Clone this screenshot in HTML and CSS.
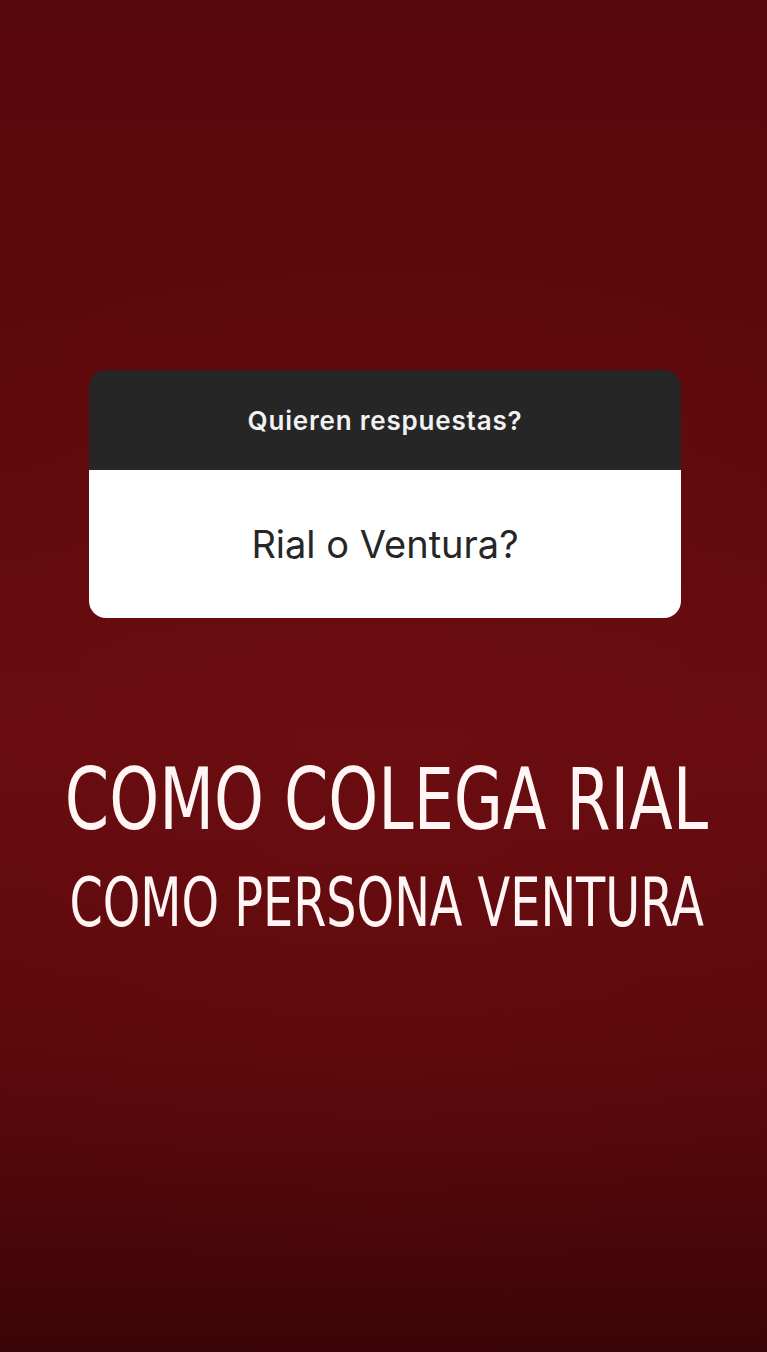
FILE: index.html
```html
<!DOCTYPE html>
<html lang="es">
<head>
<meta charset="utf-8">
<title>Quieren respuestas?</title>
<link rel="stylesheet" href="styles.css">
</head>
<body>
<main class="story">
  <section class="question-card">
    <div class="question-head">Quieren respuestas?</div>
    <div class="question-body">Rial o Ventura?</div>
  </section>
  <section class="caption">
    <p class="line line-one">COMO COLEGA RIAL</p>
    <p class="line line-two">COMO PERSONA VENTURA</p>
  </section>
</main>
</body>
</html>
```
FILE: styles.css
```css
html, body {
  margin: 0;
  padding: 0;
}
body {
  width: 767px;
  height: 1352px;
  overflow: hidden;
  background: #3c0507;
}
.story {
  box-sizing: border-box;
  width: 767px;
  height: 1352px;
  padding-top: 370px;
  display: flex;
  flex-direction: column;
  align-items: center;
  background:
    radial-gradient(ellipse 75% 40% at 50% 55%, rgba(120, 16, 20, 0.25), rgba(120, 16, 20, 0) 100%),
    linear-gradient(180deg, #58070a 0%, #600a0d 35%, #670c10 55%, #5c090c 78%, #3c0507 100%);
}
.question-card {
  width: 592px;
  margin-left: 3px;
  border-radius: 17px;
  overflow: hidden;
  display: flex;
  flex-direction: column;
  font-family: Inter, "Noto Sans", sans-serif;
}
.question-head {
  height: 100px;
  background: #262626;
  color: #f2f2f2;
  font-size: 26px;
  font-weight: 600;
  letter-spacing: 0.8px;
  display: flex;
  align-items: center;
  justify-content: center;
}
.question-body {
  height: 148px;
  background: #ffffff;
  color: #262626;
  font-size: 38px;
  font-weight: 400;
  display: flex;
  align-items: center;
  justify-content: center;
}
.caption {
  width: 767px;
  margin-top: 137px;
  display: flex;
  flex-direction: column;
  align-items: center;
  font-family: "DejaVu Sans Condensed", "DejaVu Sans", sans-serif;
  color: #fff5f4;
}
.line {
  margin: 0 0 0 6px;
  white-space: nowrap;
  text-align: center;
  transform-origin: 50% 50%;
}
.line-one {
  font-size: 85px;
  line-height: 90px;
  transform: scaleX(0.83);
}
.line-two {
  font-size: 68px;
  line-height: 90px;
  transform: scaleX(0.78);
  margin-top: 13px;
}
```
